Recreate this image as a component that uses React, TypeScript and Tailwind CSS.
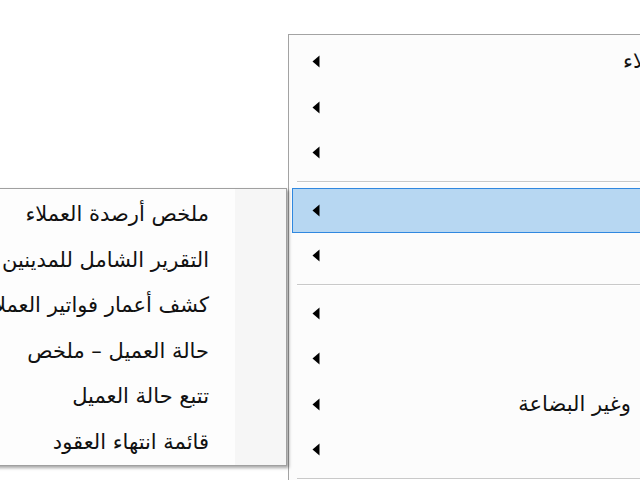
import React from 'react';

type MainItem = { label: string; pad: string; active?: boolean } | 'sep';

const mainItems: MainItem[] = [
  { label: 'العملاء', pad: 'pr-[123px]' },
  { label: 'المبيعات', pad: 'pr-[40px]' },
  { label: 'المشتريات', pad: 'pr-[40px]' },
  'sep',
  { label: 'العملاء', pad: 'pr-[40px]', active: true },
  { label: 'الموردين', pad: 'pr-[40px]' },
  'sep',
  { label: 'المخزون', pad: 'pr-[40px]' },
  { label: 'الأصناف', pad: 'pr-[40px]' },
  { label: 'وغير البضاعة', pad: 'pr-[172px]' },
  { label: 'الحسابات', pad: 'pr-[40px]' },
  'sep',
];

const subItems = [
  'ملخص أرصدة العملاء',
  'التقرير الشامل للمدينين',
  'كشف أعمار فواتير العملاء',
  'حالة العميل – ملخص',
  'تتبع حالة العميل',
  'قائمة انتهاء العقود',
];

// Small filled arrow used for cascading menu entries
const SubArrow = () => (
  <svg width="8" height="13" viewBox="0 0 8 13" className="shrink-0">
    <path d="M7.5 0.5 L0.5 6.5 L7.5 12.5 Z" fill="#000" />
  </svg>
);

export default function App() {
  return (
    <div className="relative w-[640px] h-[480px] overflow-hidden bg-white font-['DejaVu_Sans',sans-serif] text-[21px] text-[#111]">
      {/* Main context menu */}
      <div className="absolute left-[288px] top-[34px] w-[520px] border border-[#a3a3a3] bg-[#fcfcfc] pt-[4px] pb-[2px] px-[3px]">
        {mainItems.map((item, i) =>
          item === 'sep' ? (
            <div key={i} className="h-[12px] flex items-center pl-[5px]">
              <div className="w-full h-[2px] border-t border-[#c9c9c9] border-b border-b-white" />
            </div>
          ) : (
            <div
              key={i}
              className={`h-[45.5px] flex items-center pl-[19px] ${item.pad} ${
                item.active ? 'bg-[#b7d7f2] border border-[#3088e0]' : 'border border-transparent'
              }`}
            >
              <SubArrow />
              <span dir="rtl" className="flex-1 text-right whitespace-nowrap leading-none">
                {item.label}
              </span>
            </div>
          )
        )}
      </div>

      {/* Cascading submenu */}
      <div
        dir="rtl"
        className="absolute left-[-53px] top-[188px] w-[340px] h-[278px] border border-[#a0a0a0] bg-[#fdfdfd] shadow-[2px_2px_3px_rgba(0,0,0,0.35)] flex"
      >
        <div className="w-[51px] bg-[#f6f6f6]" />
        <div className="flex-1 pt-[3px] overflow-hidden">
          {subItems.map((label) => (
            <div key={label} className="h-[45.5px] flex items-center pr-[26px] whitespace-nowrap leading-none">
              {label}
            </div>
          ))}
        </div>
      </div>
    </div>
  );
}
